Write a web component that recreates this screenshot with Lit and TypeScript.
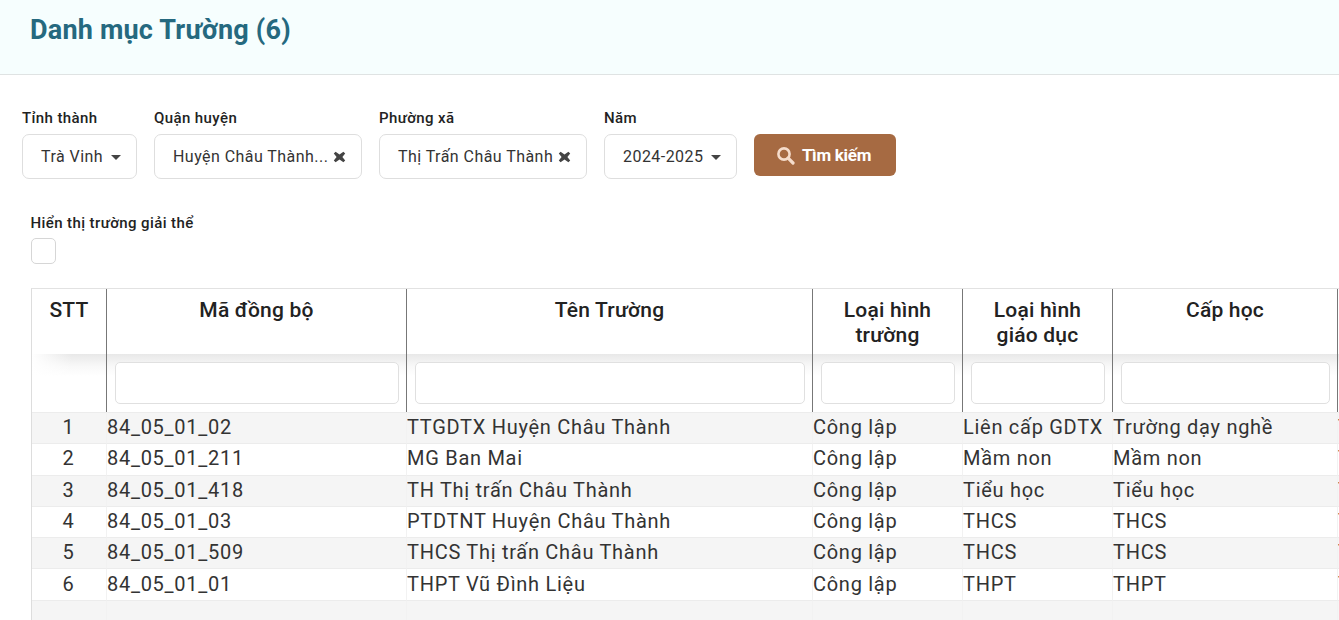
import { LitElement, html, css } from "lit";
import { customElement } from "lit/decorators.js";

const caret = html`<span class="caret"></span>`;
const times = html`<svg class="x" viewBox="0 0 13 12" width="13" height="12"><path d="M2.6 .8 6.5 3.4 10.4 .8 12.2 2.6 9.4 6 12.2 9.4 10.4 11.2 6.5 8.6 2.6 11.2 .8 9.4 3.6 6 .8 2.6Z" fill="#444"/></svg>`;

const rows = [
  ["1", "84_05_01_02", "TTGDTX Huyện Châu Thành", "Công lập", "Liên cấp GDTX", "Trường dạy nghề"],
  ["2", "84_05_01_211", "MG Ban Mai", "Công lập", "Mầm non", "Mầm non"],
  ["3", "84_05_01_418", "TH Thị trấn Châu Thành", "Công lập", "Tiểu học", "Tiểu học"],
  ["4", "84_05_01_03", "PTDTNT Huyện Châu Thành", "Công lập", "THCS", "THCS"],
  ["5", "84_05_01_509", "THCS Thị trấn Châu Thành", "Công lập", "THCS", "THCS"],
  ["6", "84_05_01_01", "THPT Vũ Đình Liệu", "Công lập", "THPT", "THPT"],
];

@customElement("app-root")
export class AppRoot extends LitElement {
  static styles = css`
    :host { display: block; height: 620px; overflow: hidden; background: #fff; font-family: Roboto, sans-serif; color: #333; }
    .head { height: 75px; box-sizing: border-box; background: #f6fefe; border-bottom: 1px solid #dfe3e3; padding: 12px 0 0 30px; }
    h1 { margin: 0; font-size: 27px; line-height: 36px; font-weight: 700; letter-spacing: .2px; color: #25697f; }
    .filters { display: flex; align-items: flex-start; gap: 17px; padding: 34px 0 0 22px; }
    .field { display: flex; flex-direction: column; gap: 7px; }
    label { font-size: 15px; line-height: 18px; font-weight: 500; letter-spacing: .4px; color: #222; display: block; }
    .sel { height: 45px; box-sizing: border-box; border: 1px solid #dedede; border-radius: 7px; display: flex; align-items: center; justify-content: space-between; padding: 0 15px 0 18px; font-size: 16px; letter-spacing: .45px; color: #333; white-space: nowrap; background: #fff; }
    .w1 { width: 115px; }
    .w2 { width: 208px; }
    .w3 { width: 133px; }
    .caret { width: 0; height: 0; border: 5px solid transparent; border-top-color: #444; border-bottom: 0; margin-top: 2px; }
    .go { height: 42px; box-sizing: border-box; margin-top: 25px; width: 142px; padding: 0 3px 0 0; background: #a66a42; border: 0; border-radius: 6px; color: #fff; font: 700 17px Roboto, sans-serif; letter-spacing: -.3px; display: flex; align-items: center; justify-content: center; gap: 7px; }
    .chk { padding: 35px 0 0 31px; }
    .chk label { margin-left: -.5px; }
    .box { width: 23px; height: 24px; margin-top: 6px; border: 1px solid #d6d6d6; border-radius: 5px; }
    .wrap { margin: 24px 0 0 31px; height: 332px; overflow: hidden; border-left: 1px solid #ddd; border-top: 1px solid #e2e2e2; }
    table { border-collapse: separate; border-spacing: 0; table-layout: fixed; width: 1440px; }
    th { height: 65px; box-sizing: border-box; vertical-align: top; padding: 9px 8px 0; font-size: 21px; line-height: 25px; font-weight: 500; letter-spacing: .2px; color: #222; text-align: center; background: #fff; border-right: 1px solid #777; }
    th.f { height: 58px; padding: 8px 7px 8px 8px; background: linear-gradient(#e8e8e8, #f8f8f8 12px, #fff 22px); }
    th.f.first { background: linear-gradient(90deg, #fff, rgba(255,255,255,0) 40px), linear-gradient(#e8e8e8, #f8f8f8 12px, #fff 22px); }
    .inp { height: 42px; box-sizing: border-box; border: 1px solid #e0e0e0; border-radius: 5px; background: #fff; }
    td { height: 31.3px; box-sizing: border-box; padding: 0 0 2px; font-size: 20px; line-height: 28px; color: #333; white-space: nowrap; overflow: hidden; border-top: 1px solid #ececec; border-right: 1px solid #f2f2f2; letter-spacing: .72px; }
    td.n { text-align: center; padding-right: 1px; }
    tr.odd td { background: #f5f5f5; }
    tr.blank td { background: #f5f5f5; height: 30px; }
  `;

  render() {
    return html`
      <div class="head"><h1>Danh mục Trường (6)</h1></div>
      <div class="filters">
        <div class="field"><label>Tỉnh thành</label><div class="sel w1">Trà Vinh ${caret}</div></div>
        <div class="field"><label>Quận huyện</label><div class="sel w2">Huyện Châu Thành... ${times}</div></div>
        <div class="field"><label>Phường xã</label><div class="sel w2">Thị Trấn Châu Thành ${times}</div></div>
        <div class="field"><label>Năm</label><div class="sel w3">2024-2025 ${caret}</div></div>
        <button class="go">
          <svg width="19" height="19" viewBox="0 0 19 19" fill="none" stroke="#f5dccb" stroke-width="2.6"><circle cx="8" cy="8" r="5.6"/><path d="M12.2 12.2 17 17" stroke-width="3.2" stroke-linecap="round"/></svg>
          Tìm kiếm
        </button>
      </div>
      <div class="chk"><label>Hiển thị trường giải thể</label><div class="box"></div></div>
      <div class="wrap">
        <table>
          <colgroup><col style="width:75px"/><col style="width:300px"/><col style="width:406px"/><col style="width:150px"/><col style="width:150px"/><col style="width:225px"/><col style="width:134px"/></colgroup>
          <thead>
            <tr><th>STT</th><th>Mã đồng bộ</th><th>Tên Trường</th><th>Loại hình<br />trường</th><th>Loại hình<br />giáo dục</th><th>Cấp học</th><th></th></tr>
            <tr>
              <th class="f first"></th>
              ${[1, 2, 3, 4, 5, 6].map(() => html`<th class="f"><div class="inp"></div></th>`)}
            </tr>
          </thead>
          <tbody>
            ${rows.map((r, i) => html`<tr class=${i % 2 ? "" : "odd"}>
              ${r.map((c, j) => html`<td class=${j ? "" : "n"}>${c}</td>`)}<td>Trường</td>
            </tr>`)}
            <tr class="blank">${[0, 1, 2, 3, 4, 5, 6].map(() => html`<td></td>`)}</tr>
          </tbody>
        </table>
      </div>
    `;
  }
}
